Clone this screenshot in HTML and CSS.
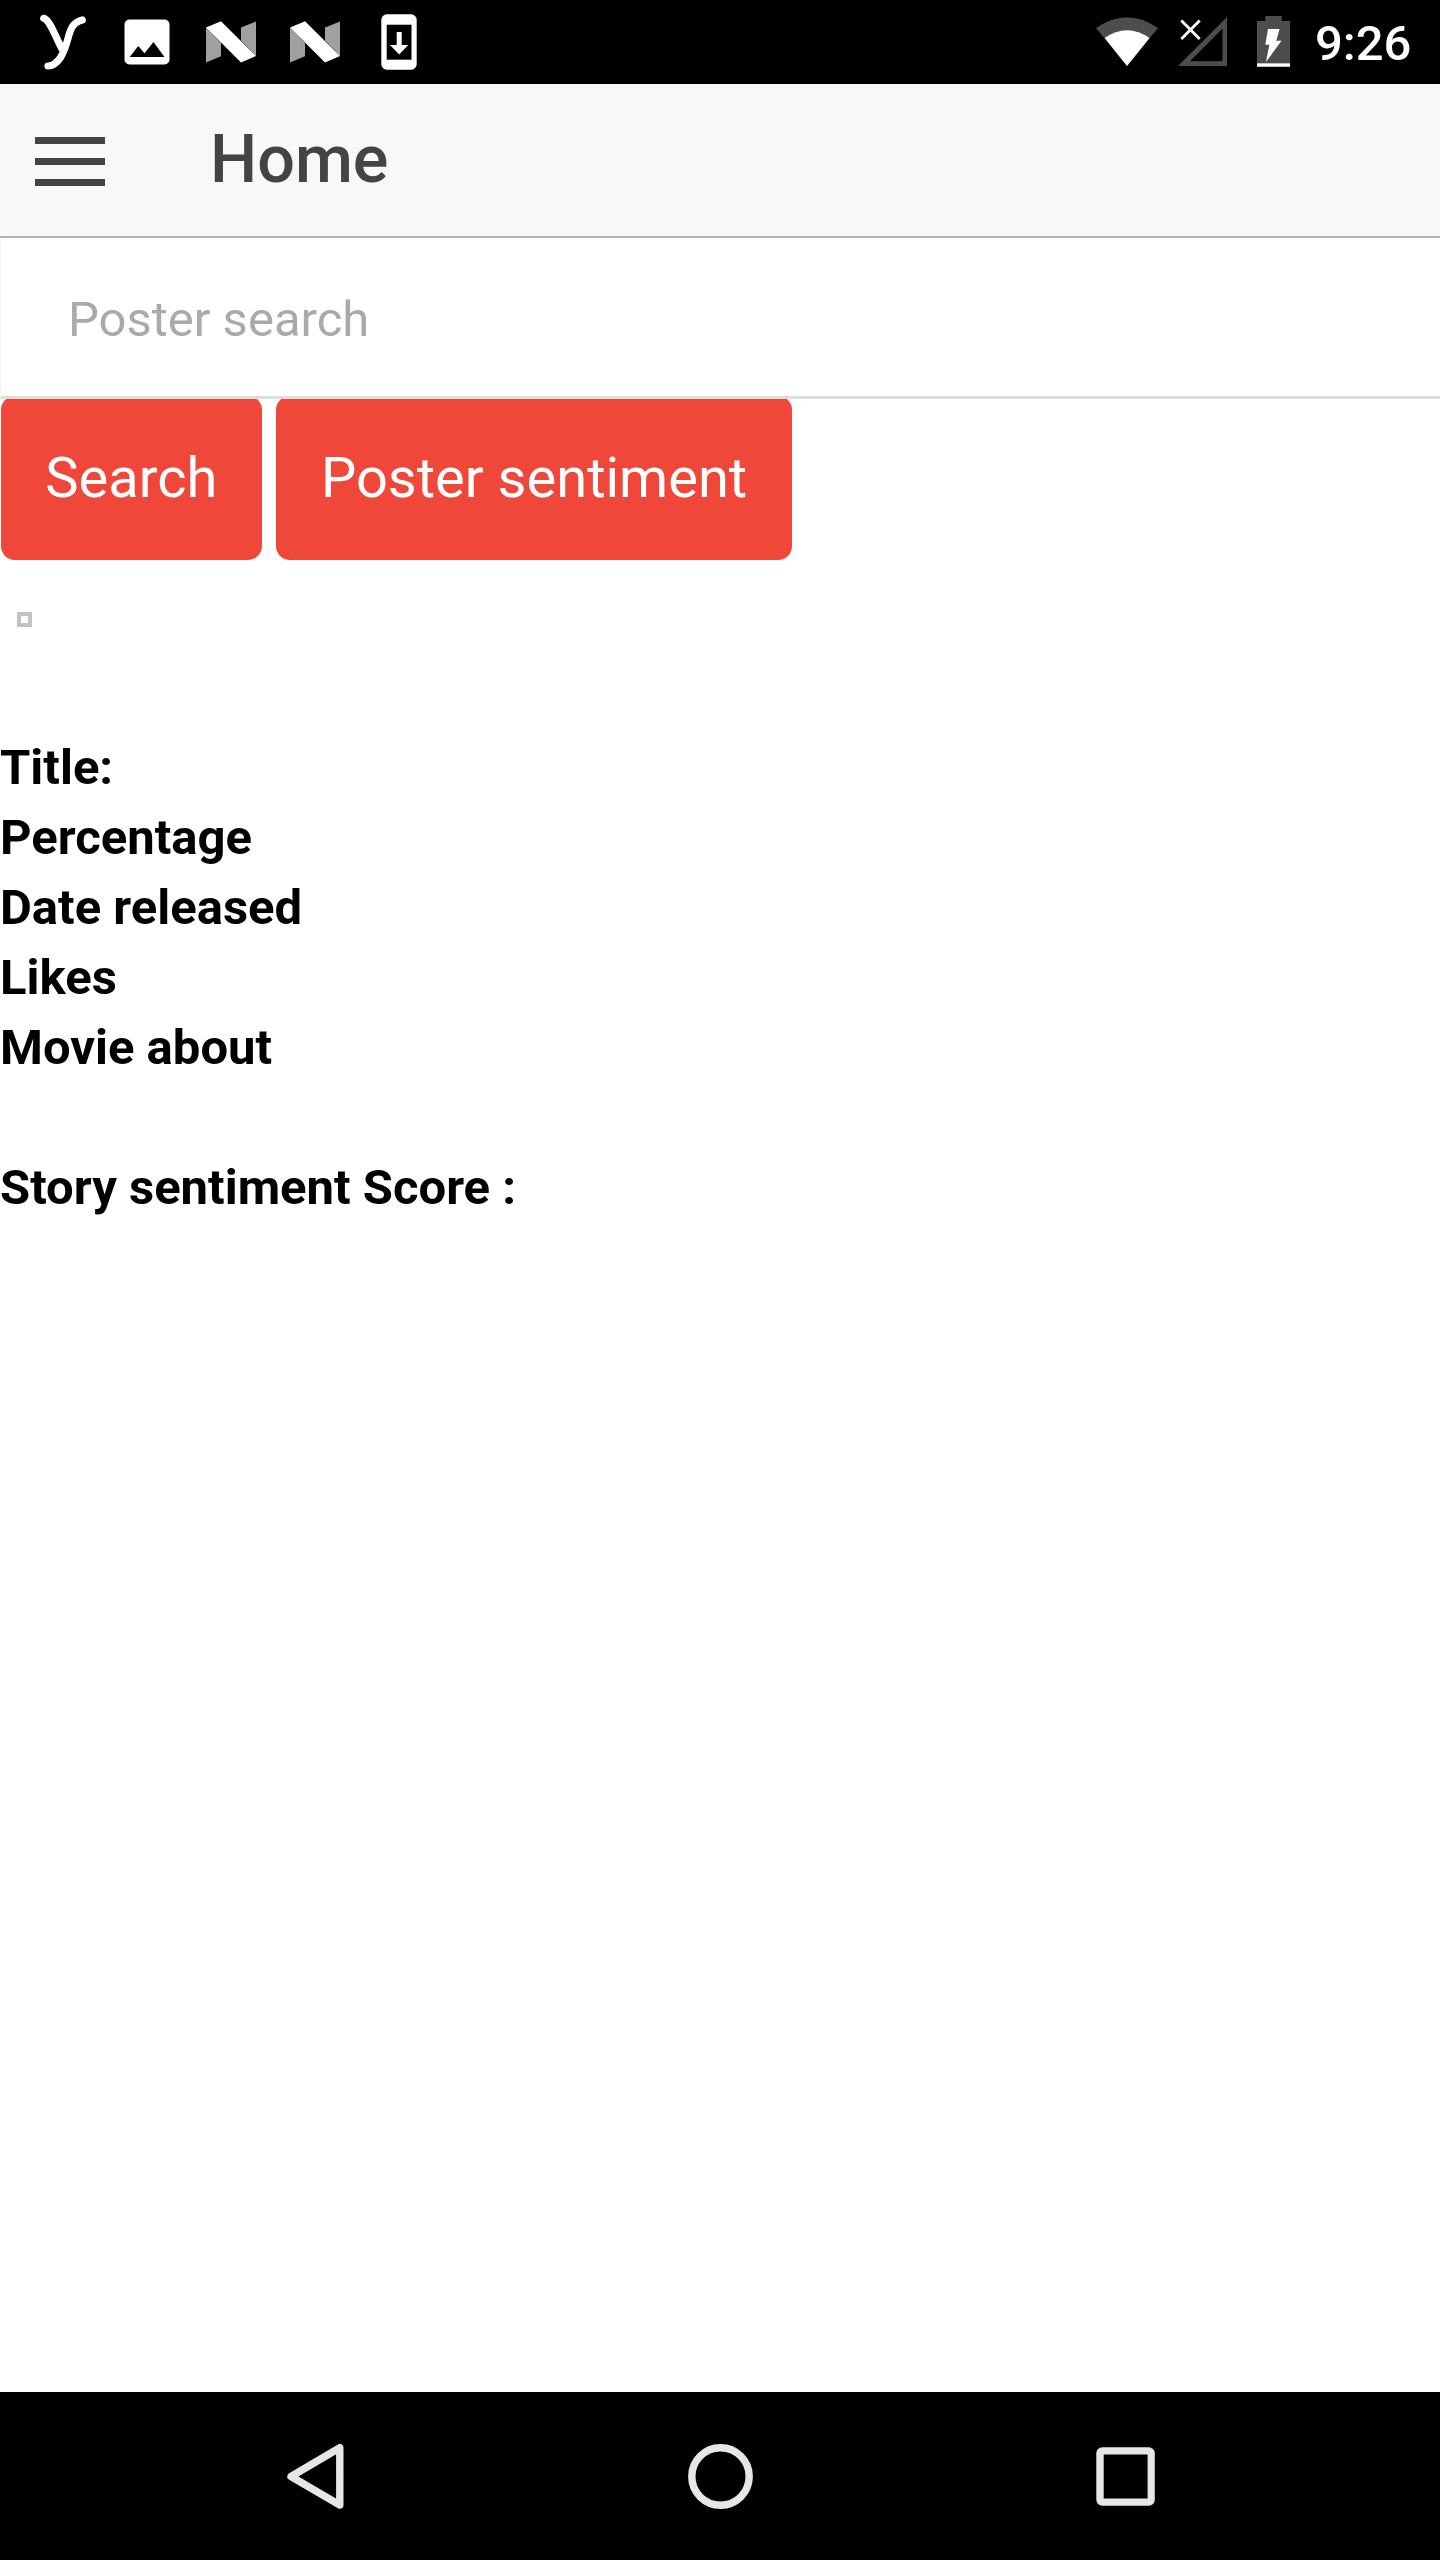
FILE: index.html
```html
<!DOCTYPE html>
<html lang="en">
<head>
<meta charset="utf-8">
<title>Home</title>
<link rel="stylesheet" href="styles.css">
</head>
<body>
<div class="status">
  <svg class="slot" viewBox="21 0 84 84"><path d="M43.700 18.300C50 20 54.500 35 62 49M82.300 20C66 24 71 41 60.500 57.500C56.500 63.500 53 66 48 66" fill="none" stroke="#fff" stroke-width="7.200" stroke-linecap="round"/></svg>
  <svg class="slot" viewBox="105 0 84 84"><rect x="124.500" y="19.500" width="45" height="45" rx="5" fill="#fff"/><path d="M129.700 57L138.300 46L144.500 53.300L153.500 42L164.500 57Z"/></svg>
  <svg class="slot" viewBox="189 0 84 84"><path d="M206 27.500L221 43V56.200L206 62.500ZM256 21.500V56L241 40.500V27.500Z" fill="#a0a0a0"/><path d="M206 27.500L221 21.300L256 56L241 62.500Z" fill="#fff"/></svg>
  <svg class="slot" viewBox="189 0 84 84"><path d="M206 27.500L221 43V56.200L206 62.500ZM256 21.500V56L241 40.500V27.500Z" fill="#a0a0a0"/><path d="M206 27.500L221 21.300L256 56L241 62.500Z" fill="#fff"/></svg>
  <svg class="slot" viewBox="357 0 84 84"><rect x="381.300" y="14.300" width="35.400" height="55.400" rx="5.500" fill="#fff"/><path d="M386.700 24.700H411.500V59.700H386.700Z"/><path d="M396.700 32H401.700V45H408.300L399.200 54.500L390 45H396.700Z" fill="#fff"/></svg>
  <div class="system">
    <svg class="signals" viewBox="1090 0 210 84">
      <path d="M1127 66L1096 28Q1127 6.500 1158 28Z" fill="#4d4d4d"/><path d="M1127 66L1104.700 38Q1127 22.500 1149.500 38Z" fill="#fff"/>
      <path d="M1178 66L1227 17V66ZM1190 61.300H1222.500V28.500Z" fill="#4d4d4d" fill-rule="evenodd"/>
      <path d="M1181.300 20.500L1199.700 39M1199.700 20.500L1181.300 39" stroke="#fff" stroke-width="2.800"/>
      <path d="M1257 21H1265.300V16H1281.700V21H1290V63H1257Z" fill="#4d4d4d"/><path d="M1257 63.300H1290V66.700H1257ZM1268 29H1279.600L1276.300 40.700H1281.500L1266 62L1269.300 44.700H1265.300Z" fill="#fff"/>
    </svg>
    <span class="time">9:26</span>
  </div>
</div>
<header class="header">
  <button class="menu" aria-label="Menu"><i></i><i></i><i></i></button>
  <h1 class="title">Home</h1>
</header>
<main class="content">
  <input class="search" type="text" placeholder="Poster search">
  <div class="actions"><button class="btn">Search</button><button class="btn">Poster sentiment</button></div>
  <div class="poster"></div>
  <div class="details">
    <p>Title:</p>
    <p>Percentage</p>
    <p>Date released</p>
    <p>Likes</p>
    <p>Movie about</p>
    <p class="score">Story sentiment Score :</p>
  </div>
</main>
<nav class="nav">
  <svg class="key" viewBox="275 2436 80 80"><path d="M339.800 2447.700V2505L291 2476.500Z" stroke-linejoin="round"/></svg>
  <svg class="key" viewBox="680 2436 80 80"><circle cx="720.500" cy="2476.500" r="28.700"/></svg>
  <svg class="key" viewBox="1085 2436 80 80"><rect x="1096.300" y="2447.300" width="58.500" height="58.500" rx="6" fill="#e6e6e6" stroke="none"/><path d="M1103.700 2454.500H1147.600V2498.500H1103.700Z" fill="#000" stroke="none"/></svg>
</nav>
</body>
</html>
```
FILE: styles.css
```css
* { box-sizing: border-box; }
body {
  margin: 0;
  height: 2560px;
  display: flex;
  flex-direction: column;
  background: #fff;
  color: #000;
  font-family: Roboto, sans-serif;
}
svg { display: block; flex: none; }
.status {
  height: 84px;
  flex: none;
  display: flex;
  padding-left: 21px;
  background: #000;
}
.slot { width: 84px; height: 84px; }
.system {
  margin-left: auto;
  display: flex;
  width: 350px;
}
.signals { width: 210px; height: 84px; }
.time {
  padding: 2px 0 0 15px;
  color: #fff;
  font-size: 49px;
  font-weight: 500;
  line-height: 84px;
}
.header {
  height: 154px;
  flex: none;
  display: flex;
  align-items: flex-start;
  padding-left: 35px;
  background: #f8f8f8;
  border-bottom: 2px solid #b2b2b2;
}
.menu {
  display: flex;
  flex-direction: column;
  gap: 14px;
  width: 70px;
  margin: 53px 0 0;
  padding: 0;
  border: 0;
  background: none;
}
.menu i { width: 70px; height: 7px; background: #444; }
.title {
  margin: 0 0 0 105px;
  color: #444;
  font-size: 66.5px;
  font-weight: 500;
  line-height: 150px;
}
.content { flex: 1; }
.search {
  display: block;
  position: relative;
  z-index: 1;
  width: 100%;
  height: 161px;
  margin: 0;
  padding: 4px 0 0 67px;
  border: solid #ddd;
  border-width: 0 0 3px 1px;
  border-left-color: #f3f3f3;
  border-radius: 0;
  background: #fff;
  outline: 0;
  font: 400 49px Roboto, sans-serif;
}
.search::placeholder { color: #aaa; opacity: 1; }
.actions {
  display: flex;
  gap: 14px;
  margin-top: -3px;
  padding-left: 0.5px;
}
.btn {
  height: 164px;
  padding: 0 44.8px;
  border: 0;
  border-radius: 14px;
  background: #ef473a;
  color: #fff;
  font: 400 56px/164px Roboto, sans-serif;
}
.poster {
  width: 15px;
  height: 15px;
  margin: 52px 0 0 17px;
  border: 4px solid #c2c2c2;
}
.details {
  margin-top: 106px;
  font-size: 49px;
  font-weight: 700;
  line-height: 70px;
}
.details p { margin: 0; }
.details .score { margin-top: 70px; }
.nav {
  height: 168px;
  flex: none;
  display: flex;
  justify-content: center;
  align-items: center;
  gap: 325px;
  background: #000;
}
.key {
  width: 80px;
  height: 80px;
  fill: none;
  stroke: #e6e6e6;
  stroke-width: 7.4px;
}
```
